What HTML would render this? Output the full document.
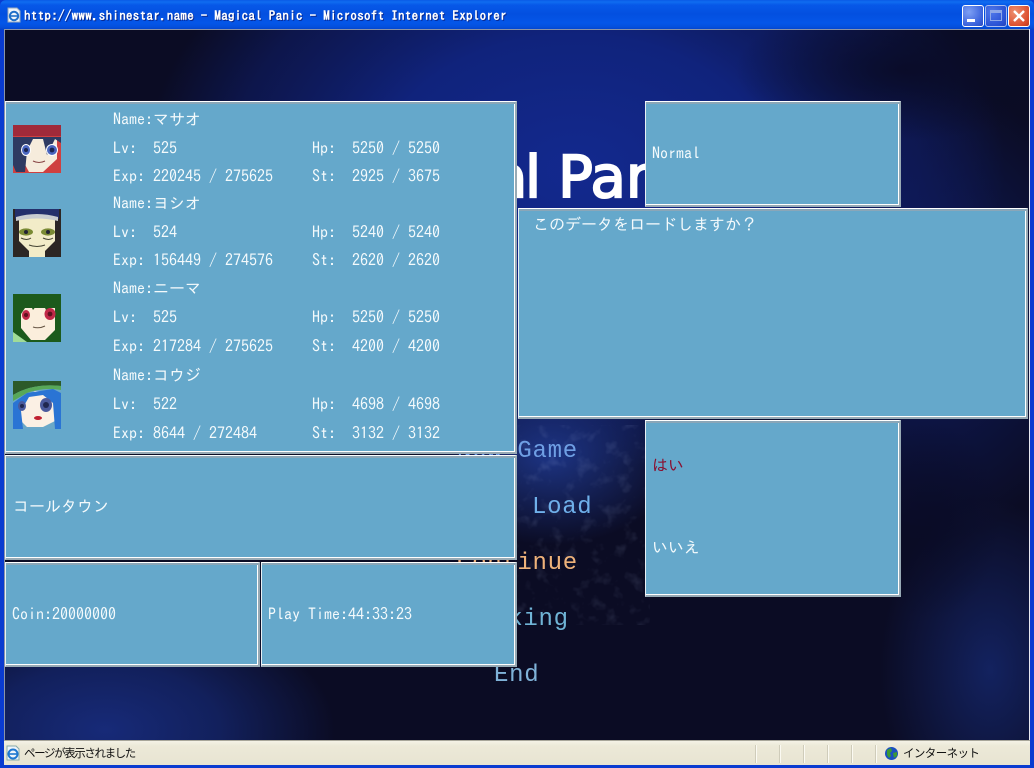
<!DOCTYPE html>
<html lang="ja"><head><meta charset="utf-8"><title>Magical Panic</title>
<style>
html,body{margin:0;padding:0;width:1034px;height:768px;overflow:hidden;background:#0a3bd0}
body{position:relative;font-family:"IPAGothic","Liberation Mono","Noto Sans CJK JP",monospace}
#tb{position:absolute;left:0;top:0;width:1034px;height:30px;background:linear-gradient(#0a5ae6 0,#0f6cf0 2px,#0758e8 5px,#0350e0 14px,#0456e8 23px,#0450dc 27px,#0340c8 30px);border-radius:6px 6px 0 0}
#tt{position:absolute;left:24px;top:8px;font:bold 13px/15px "IPAGothic","Liberation Mono",monospace;letter-spacing:.3px;color:#fff;text-shadow:1px 1px 0 #0a2a90;white-space:pre}
.btn{position:absolute;top:5px;width:20px;height:20px;border:1px solid #fff;border-radius:3px;box-sizing:content-box}
#game{position:absolute;left:5px;top:30px;width:1024px;height:710px;overflow:hidden;background:#0b0c24}
#game svg.bg{position:absolute;left:0;top:0}
#edgeT{position:absolute;left:4px;top:29px;width:1026px;height:1px;background:#8a94a8}
#edgeL{position:absolute;left:4px;top:29px;width:1px;height:712px;background:#8a94a8}
#edgeR{position:absolute;left:1029px;top:29px;width:1px;height:712px;background:#e8e8f0}
.m{position:absolute;font:24px/28px "Liberation Mono",monospace;letter-spacing:.7px;white-space:pre}
.ttl{position:absolute;top:112px;font:58px/70px "DejaVu Sans","Liberation Sans",sans-serif;color:#fff;white-space:pre;-webkit-text-stroke:2px #fff}
.p{position:absolute;box-sizing:border-box;background:#65a8cb;border-top:1px solid #fff;border-left:1px solid #e8f0f4;border-right:2px solid #98aab5;border-bottom:2px solid #98aab5;box-shadow:inset 0 2px 0 #8aa6b8,inset -1px -1px 0 #fff}
.t{position:absolute;font:16px/18px "IPAGothic","Liberation Mono",monospace;color:#f4fafc;white-space:pre}
.f{position:absolute;left:13px;width:48px;height:48px}
#sb{position:absolute;left:0;top:740px;width:1034px;height:28px;background:#0a3bd0}
#si{position:absolute;left:4px;top:0;width:1026px;height:24px;background:linear-gradient(#f4f2e6,#ece9d8 5px,#e8e4d2);border-top:1px solid #a8a69a}
.d{position:absolute;top:4px;width:1px;height:18px;background:#cfccba;border-right:1px solid #fbfaf2}
.s{position:absolute;font:11.5px/14px "Noto Sans CJK JP",sans-serif;color:#111;white-space:pre;top:746px}
</style></head><body>

<div id="tb">
<svg style="position:absolute;left:6px;top:7px" width="16" height="16" viewBox="0 0 16 16"><path d="M2 1h9l3 3v11H2z" fill="#eef4fa" stroke="#9ab"/><circle cx="8" cy="9" r="4.2" fill="none" stroke="#1f6fc8" stroke-width="2"/><path d="M3.5 9h9" stroke="#1f6fc8" stroke-width="1.6"/></svg>
<div id="tt">http://www.shinestar.name - Magical Panic - Microsoft Internet Explorer</div>
<div class="btn" style="left:962px;background:radial-gradient(circle at 30% 30%,#7ea0f4,#3a62dc 70%,#2a4cc0)"><div style="position:absolute;left:4px;top:13px;width:8px;height:3px;background:#fff"></div></div>
<div class="btn" style="left:985px;background:radial-gradient(circle at 30% 30%,#4f78ea,#2a52d4 70%,#2244bc);border-color:#a8bcf0"><div style="position:absolute;left:4px;top:4px;width:12px;height:11px;border:1px solid #8ea8e8;border-top-width:3px;box-sizing:border-box"></div></div>
<div class="btn" style="left:1008px;background:radial-gradient(circle at 30% 30%,#ee9070,#dc5030 70%,#c03818)"><svg style="position:absolute;left:3px;top:3px" width="14" height="14"><path d="M2 2L12 12M12 2L2 12" stroke="#fff" stroke-width="2.4"/></svg></div>
</div>

<div id="game">
<svg class="bg" width="1024" height="710" viewBox="0 0 1024 710">
<defs>
<radialGradient id="a" gradientUnits="userSpaceOnUse" cx="0" cy="0" r="1" gradientTransform="translate(570 140) scale(430 300)"><stop offset="0" stop-color="#13298e"/><stop offset=".45" stop-color="#10237c"/><stop offset=".8" stop-color="#0e1a5c" stop-opacity=".7"/><stop offset="1" stop-color="#0e1a5c" stop-opacity="0"/></radialGradient>
<radialGradient id="b" gradientUnits="userSpaceOnUse" cx="0" cy="0" r="1" gradientTransform="translate(545 425) scale(130 90)"><stop offset="0" stop-color="#1d3484"/><stop offset="1" stop-color="#1d3484" stop-opacity="0"/></radialGradient>
<radialGradient id="c" gradientUnits="userSpaceOnUse" cx="0" cy="0" r="1" gradientTransform="translate(985 640) scale(110 170)"><stop offset="0" stop-color="#13225f"/><stop offset="1" stop-color="#13225f" stop-opacity="0"/></radialGradient>
<radialGradient id="e" gradientUnits="userSpaceOnUse" cx="0" cy="0" r="1" gradientTransform="translate(100 700) scale(230 130)"><stop offset="0" stop-color="#172a78"/><stop offset=".5" stop-color="#12205c"/><stop offset="1" stop-color="#12205c" stop-opacity="0"/></radialGradient>
<radialGradient id="g" gradientUnits="userSpaceOnUse" cx="0" cy="0" r="1" gradientTransform="translate(920 280) scale(180 230)"><stop offset="0" stop-color="#0f1c60"/><stop offset="1" stop-color="#0f1c60" stop-opacity="0"/></radialGradient>
<radialGradient id="h" gradientUnits="userSpaceOnUse" cx="0" cy="0" r="1" gradientTransform="translate(900 40) scale(170 70)"><stop offset="0" stop-color="#090b26" stop-opacity=".9"/><stop offset="1" stop-color="#090b26" stop-opacity="0"/></radialGradient>
<radialGradient id="j" gradientUnits="userSpaceOnUse" cx="0" cy="0" r="1" gradientTransform="translate(925 490) scale(70 100)"><stop offset="0" stop-color="#090b26" stop-opacity=".7"/><stop offset="1" stop-color="#090b26" stop-opacity="0"/></radialGradient>
<filter id="n" x="0" y="0" width="100%" height="100%"><feTurbulence type="fractalNoise" baseFrequency=".07" numOctaves="3" seed="5"/><feColorMatrix values="0 0 0 0 .5  0 0 0 0 .6  0 0 0 0 .9  1.6 0 0 0 -.85"/></filter>
</defs>
<rect width="1024" height="710" fill="#0b0c24"/>
<rect width="1024" height="710" fill="url(#a)"/>
<rect width="1024" height="710" fill="url(#g)"/>
<rect width="1024" height="710" fill="url(#b)"/>
<rect width="1024" height="710" fill="url(#c)"/>
<rect width="1024" height="710" fill="url(#e)"/>
<rect width="1024" height="710" fill="url(#h)"/>
<rect width="1024" height="710" fill="url(#j)"/>
<rect x="510" y="395" width="135" height="200" filter="url(#n)" opacity=".22"/>
</svg>
<div class="ttl" style="left:487px">a</div>
<div class="ttl" style="left:520px">l</div>
<div class="ttl" style="left:553px">Pan</div>
<div class="m" style="left:452px;top:408px;color:#6f9fe4">New Game</div>
<div class="m" style="left:527px;top:464px;color:#6fb0ea">Load</div>
<div class="m" style="left:452px;top:520px;color:#eeb27a">Continue</div>
<div class="m" style="left:458px;top:576px;color:#70b4d6">Ranking</div>
<div class="m" style="left:489px;top:632px;color:#7fb2d8">End</div>
</div>
<div id="edgeT"></div><div id="edgeL"></div><div id="edgeR"></div>

<div id="sb"><div id="si">
<div class="d" style="left:751px"></div><div class="d" style="left:775px"></div><div class="d" style="left:799px"></div><div class="d" style="left:823px"></div><div class="d" style="left:847px"></div><div class="d" style="left:871px"></div>
</div></div>
<svg style="position:absolute;left:5px;top:745px" width="16" height="16" viewBox="0 0 16 16"><path d="M2 1h9l3 3v11H2z" fill="#eef4fa" stroke="#8aa"/><circle cx="8" cy="9" r="4.5" fill="none" stroke="#1f78d0" stroke-width="2"/><path d="M3 9h10" stroke="#1f78d0" stroke-width="1.6"/></svg>
<div class="s" style="left:24px;letter-spacing:-1.4px">ページが表示されました</div>
<svg style="position:absolute;left:884px;top:746px" width="15" height="15" viewBox="0 0 15 15"><circle cx="7.5" cy="7.5" r="6.5" fill="#1a50c0"/><path d="M3 4l4-2 1 3-2 2 1 3-2 2-2-3zM9 7l4-1 0 4-3 2z" fill="#3c9a34"/></svg>
<div class="s" style="left:903px;letter-spacing:-.6px">インターネット</div>

<div class="p" style="left:5px;top:101px;width:512px;height:353px"></div>
<div class="p" style="left:5px;top:455px;width:512px;height:105px"></div>
<div class="p" style="left:5px;top:562px;width:255px;height:105px"></div>
<div class="p" style="left:261px;top:562px;width:256px;height:105px"></div>
<div class="p" style="left:645px;top:101px;width:256px;height:106px"></div>
<div class="p" style="left:518px;top:208px;width:510px;height:211px"></div>
<div class="p" style="left:645px;top:420px;width:256px;height:177px"></div>

<svg class="f" style="top:125px" viewBox="0 0 48 48"><rect width="48" height="48" fill="#cf4040"/><rect width="48" height="11" fill="#a02a3a"/><path d="M10 12h34v22L30 47H16L10 36z" fill="#f6ecdc"/><path d="M0 12h48v6L42 14 34 30 30 14 20 14 14 26 12 47H3L0 40z" fill="#2e3a62"/><ellipse cx="13" cy="25" rx="5" ry="6" fill="#fff"/><ellipse cx="39" cy="25" rx="6" ry="6" fill="#fff"/><ellipse cx="13" cy="25" rx="4" ry="5" fill="#4a66c0"/><ellipse cx="39" cy="25" rx="5" ry="5" fill="#4a66c0"/><circle cx="13" cy="25" r="2" fill="#1a2450"/><circle cx="39" cy="25" r="2.4" fill="#1a2450"/><path d="M20 36q6 3 12 0" stroke="#844" fill="none"/></svg>
<svg class="f" style="top:209px" viewBox="0 0 48 48"><rect width="48" height="48" fill="#2c2624"/><path d="M6 8h36v24L32 42H16L6 32z" fill="#f2ecc8"/><path d="M2 0h44v10L24 6 2 10z" fill="#24306c"/><path d="M3 8q21-6 42 0v4Q24 7 3 12z" fill="#c8ccd0"/><ellipse cx="13" cy="23" rx="7" ry="3.6" fill="#7a8a34"/><ellipse cx="35" cy="23" rx="7" ry="3.6" fill="#7a8a34"/><circle cx="13" cy="23" r="2" fill="#223"/><circle cx="35" cy="23" r="2" fill="#223"/><path d="M8 29q6 3 10 0M30 29q6 3 10 0M16 36q8 3 16 0" stroke="#443" fill="none"/><rect x="16" y="42" width="16" height="6" fill="#f2ecc8"/></svg>
<svg class="f" style="top:294px" viewBox="0 0 48 48"><rect width="48" height="48" fill="#1c5a1c"/><path d="M0 38l14 10H0z" fill="#a0dc98"/><path d="M8 14h34v22L32 46H18L8 34z" fill="#fbeedc"/><path d="M0 0h48v18L40 8 34 18 28 6 20 16 16 8 8 20 4 34 0 30z" fill="#1c5a1c"/><ellipse cx="13" cy="21" rx="4" ry="5" fill="#c02848"/><ellipse cx="37" cy="20" rx="5.5" ry="6" fill="#c02848"/><circle cx="13" cy="21" r="2" fill="#601020"/><circle cx="37" cy="20" r="2.4" fill="#601020"/><path d="M20 33q6 2 12-1" stroke="#654" fill="none"/></svg>
<svg class="f" style="top:381px" viewBox="0 0 48 48"><rect width="48" height="48" fill="#6aa8c8"/><path d="M0 0h48v5Q20 2 0 14z" fill="#2c5a2a"/><path d="M0 14Q20 2 48 5v4Q30 6 14 12L0 20z" fill="#58a858"/><path d="M6 20l16-10 24 2v26L30 46H14L4 36z" fill="#fbf0e4"/><path d="M0 22L14 12 40 8l8 4v36h-6l-2-26-10-8-14 2-8 14 2 18H0z" fill="#2a74d4"/><ellipse cx="9" cy="25" rx="4" ry="5" fill="#4a5a9c"/><ellipse cx="33" cy="24" rx="6" ry="7" fill="#4a5a9c"/><circle cx="9" cy="25" r="2" fill="#202850"/><circle cx="33" cy="24" r="3" fill="#202850"/><ellipse cx="25" cy="37" rx="4" ry="2" fill="#c02030"/></svg>

<div class="t" style="left:113px;top:110px">Name:マサオ</div>
<div class="t" style="left:113px;top:139px">Lv:  525</div><div class="t" style="left:312px;top:139px">Hp:  5250 / 5250</div>
<div class="t" style="left:113px;top:167px">Exp: 220245 / 275625</div><div class="t" style="left:312px;top:167px">St:  2925 / 3675</div>
<div class="t" style="left:113px;top:194px">Name:ヨシオ</div>
<div class="t" style="left:113px;top:223px">Lv:  524</div><div class="t" style="left:312px;top:223px">Hp:  5240 / 5240</div>
<div class="t" style="left:113px;top:251px">Exp: 156449 / 274576</div><div class="t" style="left:312px;top:251px">St:  2620 / 2620</div>
<div class="t" style="left:113px;top:279px">Name:ニーマ</div>
<div class="t" style="left:113px;top:308px">Lv:  525</div><div class="t" style="left:312px;top:308px">Hp:  5250 / 5250</div>
<div class="t" style="left:113px;top:337px">Exp: 217284 / 275625</div><div class="t" style="left:312px;top:337px">St:  4200 / 4200</div>
<div class="t" style="left:113px;top:366px">Name:コウジ</div>
<div class="t" style="left:113px;top:395px">Lv:  522</div><div class="t" style="left:312px;top:395px">Hp:  4698 / 4698</div>
<div class="t" style="left:113px;top:424px">Exp: 8644 / 272484</div><div class="t" style="left:312px;top:424px">St:  3132 / 3132</div>

<div class="t" style="left:13px;top:497px">コールタウン</div>
<div class="t" style="left:12px;top:605px">Coin:20000000</div>
<div class="t" style="left:268px;top:605px">Play Time:44:33:23</div>
<div class="t" style="left:652px;top:144px">Normal</div>
<div class="t" style="left:533px;top:215px">このデータをロードしますか&#xFF1F;</div>
<div class="t" style="left:652px;top:456px;color:#8a1030">はい</div>
<div class="t" style="left:652px;top:538px">いいえ</div>
</body></html>
